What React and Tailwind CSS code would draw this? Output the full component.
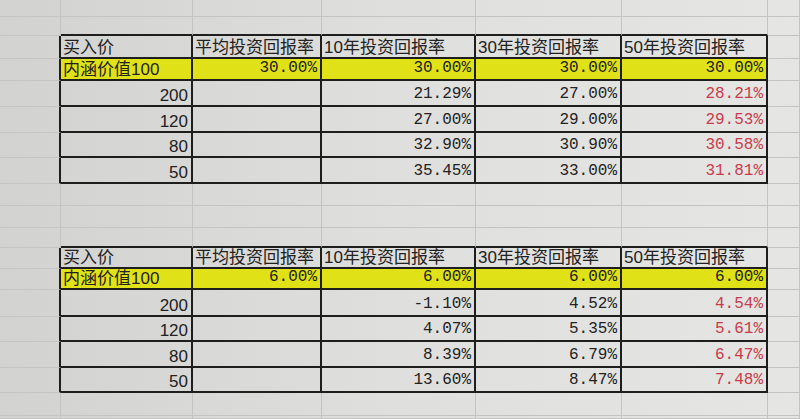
import React from "react";

const SANS = "font-['Liberation_Sans','Noto_Sans_CJK_SC',sans-serif]";
const MONO = "font-['Liberation_Mono','DejaVu_Sans_Mono',monospace]";

const T1 = [
  ["200", "", "21.29%", "27.00%", "28.21%"],
  ["120", "", "27.00%", "29.00%", "29.53%"],
  ["80", "", "32.90%", "30.90%", "30.58%"],
  ["50", "", "35.45%", "33.00%", "31.81%"],
];
const T2 = [
  ["200", "", "-1.10%", "4.52%", "4.54%"],
  ["120", "", "4.07%", "5.35%", "5.61%"],
  ["80", "", "8.39%", "6.79%", "6.47%"],
  ["50", "", "13.60%", "8.47%", "7.48%"],
];
const HEAD = ["买入价", "平均投资回报率", "10年投资回报率", "30年投资回报率", "50年投资回报率"];

const rows = [
  { h: "h-[17px]" },
  { h: "h-[19px]", above: true },
  { h: "h-[23px]", kind: "head", cells: HEAD },
  { h: "h-[22px]", kind: "yellow", cells: ["内涵价值100", "30.00%", "30.00%", "30.00%", "30.00%"] },
  { h: "h-[26px]", kind: "data", cells: T1[0] },
  { h: "h-[26px]", kind: "data", cells: T1[1] },
  { h: "h-[25px]", kind: "data", cells: T1[2] },
  { h: "h-[26px]", kind: "data", cells: T1[3] },
  { h: "h-[22px]" },
  { h: "h-[22px]" },
  { h: "h-[20px]", above: true },
  { h: "h-[21px]", kind: "head", cells: HEAD },
  { h: "h-[21px]", kind: "yellow", cells: ["内涵价值100", "6.00%", "6.00%", "6.00%", "6.00%"] },
  { h: "h-[27px]", kind: "data", cells: T2[0] },
  { h: "h-[25px]", kind: "data", cells: T2[1] },
  { h: "h-[26px]", kind: "data", cells: T2[2] },
  { h: "h-[25px]", kind: "data", cells: T2[3] },
  { h: "h-[23px]" },
  { h: "h-[3px]" },
];

const WIDTHS = ["w-[61px]", "w-[132px]", "w-[129px]", "w-[154px]", "w-[146px]", "w-[146px]", "flex-1"];

const LIGHT_R = "border-r border-r-[#c4c4c2]";
const LIGHT_B = "border-b border-b-[#c4c4c2]";
const DARK_R = "border-r-2 border-r-[#1e1e1e]";
const DARK_B = "border-b-2 border-b-[#1e1e1e]";

function Cell({ row, col }) {
  const inTable = !!row.kind;
  const isTableCol = col >= 1 && col <= 5;
  let r = LIGHT_R;
  let b = LIGHT_B;
  if (inTable && (col === 0 || isTableCol)) r = DARK_R;
  if (inTable && isTableCol) b = DARK_B;
  if (row.above && isTableCol) b = DARK_B;
  const yellow = row.kind === "yellow" && isTableCol ? "bg-[#e1e117]" : "";

  let content = null;
  if (inTable && isTableCol) {
    const text = row.cells[col - 1];
    const idx = col - 1;
    if (row.kind === "head") {
      content = (
        <span className={`${SANS} text-[17px] leading-[19px] text-[#222] pl-[2px] whitespace-nowrap`}>{text}</span>
      );
    } else if (idx === 0) {
      content = (
        <span
          className={`${SANS} text-[17px] leading-[19px] text-[#222] whitespace-nowrap ${
            row.kind === "yellow" ? "pl-[2px] mr-auto" : "ml-auto pr-[3px]"
          }`}
        >
          {text}
        </span>
      );
    } else {
      const red = row.kind === "data" && idx === 4;
      content = (
        <span
          className={`${MONO} text-[16px] leading-[19px] ml-auto pr-[3px] pb-[1px] whitespace-nowrap ${
            red ? "text-[#c93b4c]" : "text-[#222]"
          }`}
        >
          {text}
        </span>
      );
    }
  }

  return (
    <div className={`${WIDTHS[col]} shrink-0 h-full flex items-end overflow-hidden ${r} ${b} ${yellow}`}>
      {content}
    </div>
  );
}

export default function App() {
  return (
    <div className="w-[800px] h-[419px] overflow-hidden bg-linear-to-r from-[#d2d2d0] via-[#dfdfdd] to-[#e5e5e3]">
      {rows.map((row, i) => (
        <div key={i} className={`flex w-full ${row.h}`}>
          {[0, 1, 2, 3, 4, 5, 6].map((c) => (
            <Cell key={c} row={row} col={c} />
          ))}
        </div>
      ))}
    </div>
  );
}
